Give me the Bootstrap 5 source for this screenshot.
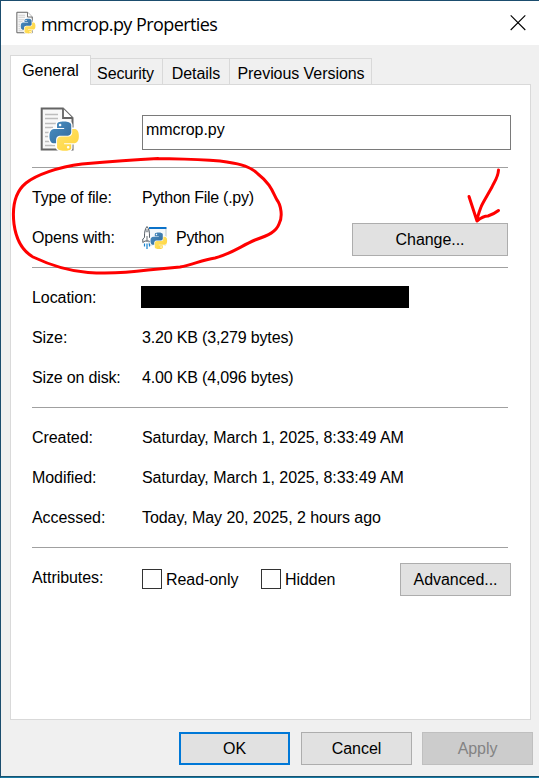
<!DOCTYPE html>
<html lang="en">
<head>
<meta charset="utf-8">
<title>mmcrop.py Properties</title>
<link href="https://cdn.jsdelivr.net/npm/bootstrap@5.3.0/dist/css/bootstrap.min.css" rel="stylesheet">
<style>
body{font:16px/20px "Liberation Sans",Arial,sans-serif;letter-spacing:-.06px;color:#000;background:#f0f0f0;overflow:hidden}
.dialog{width:539px;height:778px;border-top:1px solid #1b4d6e;border-left:1px solid #1b4d6e;border-bottom:1px solid #1a7aa3;box-shadow:inset 0 -1px #175270}
.titlebar{height:44px;padding-left:15px;padding-right:12px}
.title-text{font:18px/24px "Open Sans","Noto Sans",sans-serif;letter-spacing:-.57px;margin-left:5px;padding-top:1px}
.tabs{height:29px;margin:10px 0 0 9px}
.tab{height:26px;border:1px solid #d9d9d9;border-left:0;border-bottom:0;padding-top:5px;text-align:center;white-space:nowrap}
.tab.current{height:30px;width:81px;border-left:1px solid #d9d9d9;background:#fff;margin-bottom:-1px;z-index:1;padding-top:5px}
.tab.security{width:72px;padding-right:2px;letter-spacing:-.12px}
.tab.details{width:67px}
.tab.versions{width:142px;padding-left:1px}
.panel{width:521px;height:636px;margin-left:9px;border:1px solid #d9d9d9;padding-left:21px}
.file-head{height:82px;padding-top:22px}
.file-icon{margin-left:8px}
.name-box{width:369px;height:35px;border:1px solid #7a7a7a;padding:4px 3px;margin:8px 0 0 62px}
.group{width:476px;border-top:1px solid #a0a0a0;padding:10px 0 9px}
.line-item{height:40px}
.key{width:110px;flex:none}
.snug{letter-spacing:-.16px}
.tight{letter-spacing:-.28px}
.push{height:33px;background:#e1e1e1;border:1px solid #adadad;border-radius:0;padding:0;font-size:16px;line-height:31px;letter-spacing:-.06px;color:#000;flex:none}
.push.main{border:2px solid #0078d7;line-height:29px}
.push.off{background:#ccc;border-color:#bfbfbf;color:#838383}
.lower{margin-top:2px}
.attributes{width:479px;padding-top:5px}
.attributes .key{padding-top:5px}
.checks{padding-top:6px}
.checks.first{width:119px}
.checks .caption{padding:1px 0 0 4px;white-space:nowrap}
.box{width:20px;height:20px;border:1px solid #333;background:#fff;flex:none}
.redacted{width:268px;height:22px;background:#000;margin:-2px 0 0 -1px}
.footer-row{gap:11px;padding:12px 6px 0 0}
.footer-row .off{margin-left:-1px}
.w111{width:111px}.w156{width:156px}
.ink{left:0;top:0;pointer-events:none;z-index:5}
</style>
<script src="https://cdn.jsdelivr.net/npm/bootstrap@5.3.0/dist/js/bootstrap.bundle.min.js"></script>
</head>
<body>
<svg width="0" height="0" class="position-absolute">
<defs>
<path id="snake" d="M14.25.18l.9.2.73.26.59.3.45.32.34.34.25.34.16.33.1.3.04.26.02.2-.01.13V8.5l-.05.63-.13.55-.21.46-.26.38-.3.31-.33.25-.35.19-.35.14-.33.1-.3.07-.26.04-.21.02H8.77l-.69.05-.59.14-.5.22-.41.27-.33.32-.27.35-.2.36-.15.37-.1.35-.07.32-.04.27-.02.21v3.06H3.17l-.21-.03-.28-.07-.32-.12-.35-.18-.36-.26-.36-.36-.35-.46-.32-.59-.28-.73-.21-.88-.14-1.05-.05-1.23.06-1.22.16-1.04.24-.87.32-.71.36-.57.4-.44.42-.33.42-.24.4-.16.36-.1.32-.05.24-.01h.16l.06.01h8.16v-.83H6.18l-.01-2.75-.02-.37.05-.34.11-.31.17-.28.25-.26.31-.23.38-.2.44-.18.51-.15.58-.12.64-.1.71-.06.77-.04.84-.02 1.27.05zm-6.3 1.98l-.23.33-.08.41.08.41.23.34.33.22.41.09.41-.09.33-.22.23-.34.08-.41-.08-.41-.23-.33-.33-.22-.41-.09-.41.09z"/>
<linearGradient id="blue" x1="0" y1="0" x2="1" y2="1"><stop stop-color="#4a90c4"/><stop offset="1" stop-color="#33699a"/></linearGradient>
<linearGradient id="gold" x1="0" y1="0" x2="1" y2="1"><stop stop-color="#ffd43b"/><stop offset="1" stop-color="#ffe36c"/></linearGradient>
<g id="python"><use href="#snake" fill="url(#blue)"/><use href="#snake" fill="url(#gold)" transform="rotate(180 12 12)"/></g>
<g id="halo" fill="#fff" stroke="#fff" stroke-width="2.2" stroke-linejoin="round"><use href="#snake"/><use href="#snake" transform="rotate(180 12 12)"/></g>
<symbol id="pyfile" viewBox="0 0 40 46">
<path d="M1.7 1.5H23L32.5 11V42.5H1.7Z" fill="#f8f8f8" stroke="#646464" stroke-width="2"/>
<path d="M23 1.5V11H32.5" fill="#fff" stroke="#646464" stroke-width="1.8"/>
<path d="M5 7.5H18M5 11.5H18M5 16.5H28M5 20.5H13M5 25.5H10M5 29.5H10M5 34.5H11M5 38.5H15" stroke="#bdbdbd" stroke-width="1.4"/>
<g transform="translate(9.5 14.5) scale(1.22)"><use href="#halo"/><use href="#python"/></g>
</symbol>
</defs>
</svg>
<main class="dialog position-relative d-flex flex-column">
<header class="titlebar bg-white d-flex align-items-center">
<svg width="20" height="24"><use href="#pyfile"/></svg>
<div class="title-text">mmcrop.py Properties</div>
<svg class="ms-auto" width="18" height="18" viewBox="0 0 18 18"><path d="M1.7 1.4L16.3 16M16.3 1.4L1.7 16" stroke="#000" stroke-width="1.1"/></svg>
</header>
<nav class="tabs d-flex align-items-end">
<div class="tab current position-relative">General</div>
<div class="tab security">Security</div>
<div class="tab details">Details</div>
<div class="tab versions">Previous Versions</div>
</nav>
<section class="panel bg-white">
<div class="file-head d-flex align-items-start">
<svg class="file-icon" width="40" height="46"><use href="#pyfile"/></svg>
<div class="name-box">mmcrop.py</div>
</div>
<div class="group">
<div class="line-item d-flex align-items-center"><div class="key snug">Type of file:</div><div class="tight">Python File (.py)</div></div>
<div class="line-item d-flex align-items-center"><div class="key snug">Opens with:</div>
<svg width="26" height="26" viewBox="0 0 26 26">
<path d="M7 3.5H24V20H7Z" fill="#f4f8fb" stroke="#a9bac7" stroke-width=".8"/><path d="M7 2H24.5V4H7Z" fill="#0b72c9"/>
<path d="M2.5 12.5Q2.2 4.500 5 1.500Q7.800 4.500 7.500 12.500L9 14V17.500L7 16H3L.8 17.500V14Z" fill="#fff" stroke="#586068" stroke-width="1"/><circle cx="5" cy="5.800" r="1.100" fill="#fff" stroke="#586068" stroke-width=".7"/><path d="M5 11V16.500" stroke="#586068" stroke-width=".9"/>
<path d="M2.500 18.500V21.500M5 18.500V24M7.500 18.500V21.500" stroke="#1683cf" stroke-width="1.2"/>
<g transform="translate(8.500 7.500) scale(.69)"><use href="#halo"/><use href="#python"/></g>
</svg>
<div class="ms-2 tight">Python</div><button class="btn push w156 ms-auto lower">Change...</button></div>
</div>
<div class="group">
<div class="line-item d-flex align-items-center"><div class="key">Location:</div><div class="redacted"></div></div>
<div class="line-item d-flex align-items-center"><div class="key">Size:</div><div class="snug">3.20 KB (3,279 bytes)</div></div>
<div class="line-item d-flex align-items-center"><div class="key snug">Size on disk:</div><div class="snug">4.00 KB (4,096 bytes)</div></div>
</div>
<div class="group">
<div class="line-item d-flex align-items-center"><div class="key">Created:</div><div>Saturday, March 1, 2025, 8:33:49 AM</div></div>
<div class="line-item d-flex align-items-center"><div class="key">Modified:</div><div>Saturday, March 1, 2025, 8:33:49 AM</div></div>
<div class="line-item d-flex align-items-center"><div class="key">Accessed:</div><div>Today, May 20, 2025, 2 hours ago</div></div>
</div>
<div class="group">
<div class="attributes d-flex"><div class="key">Attributes:</div>
<div class="checks first d-flex"><span class="box"></span><span class="caption">Read-only</span></div>
<div class="checks d-flex"><span class="box"></span><span class="caption">Hidden</span></div>
<button class="btn push w111 ms-auto">Advanced...</button></div>
</div>
</section>
<footer class="footer-row d-flex justify-content-end">
<button class="btn push main w111">OK</button><button class="btn push w111">Cancel</button><div class="btn push off w111">Apply</div>
</footer>
</main>
<svg class="ink position-absolute" width="539" height="778" viewBox="0 0 539 778" fill="none" stroke="#f00" stroke-width="3" stroke-linecap="round" stroke-linejoin="round">
<path d="M158 158.500C130 160 105 162 82 164C58 167 36 175 26 183C15 192 12 207 14 224C16 239 21 250 33 257C50 265 67 271 88 272.500C111 274 133 272 148 270L180 267C193 265 201 260 215 258C231 254 241 246 255 240C269 235 276 232 279 224C283 217 281 205 277 200C273 193 271 184 258 174C249 165 235 163 220 161C197 159 180 159 158 158.500"/>
<path d="M498.500 170C498 178 494 182 492 187C487 196 482 204 481 207C478 215 477 218 477 221L469 196.500M477 221Q483 216 488 216Q494 214 498.500 210.500"/>
</svg>
</body>
</html>
